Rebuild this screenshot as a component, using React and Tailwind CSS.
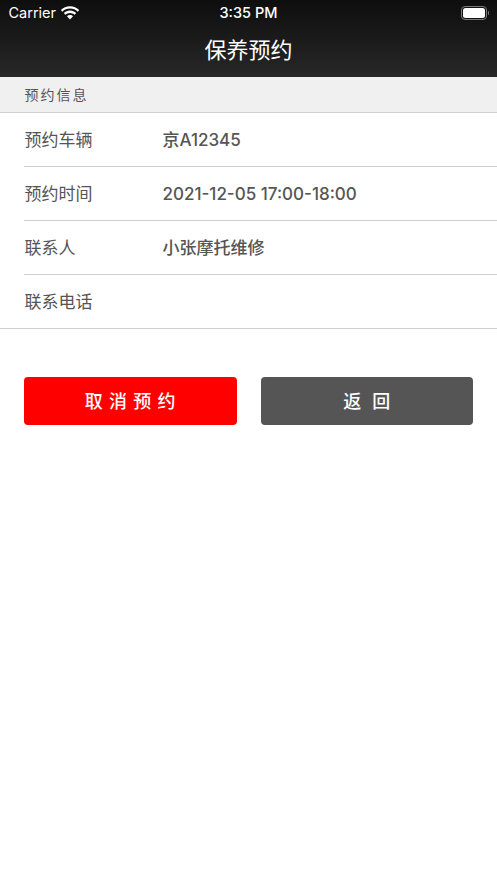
const Row = ({ label, value, last }) => (
  <div className={`flex h-[54px] items-center ${last ? 'border-b border-[#cfcfcf]' : ''}`}>
    <div className="flex h-full flex-1 items-center pl-[24px]">
      <div className={`flex h-full flex-1 items-center pl-[0.5px] pt-[2px] ${last ? '' : 'border-b border-[#cfcfcf]'}`}>
        <span className="w-[138px] text-[17px] text-[#555555]">{label}</span>
        <span className="text-[17px] font-medium text-[#555555]">{value}</span>
      </div>
    </div>
  </div>
);

const Wifi = () => (
  <svg width="20" height="15" viewBox="0 0 20 15" fill="#ffffff">
    <path d="M10 2.6c3 0 5.7 1.2 7.7 3.1l1.5-1.6C16.8 1.7 13.6.3 10 .3S3.2 1.7.8 4.1l1.5 1.6C4.3 3.8 7 2.6 10 2.6z" />
    <path d="M10 6.9c1.8 0 3.4.7 4.6 1.8l1.6-1.6C14.6 5.6 12.4 4.6 10 4.6s-4.6 1-6.2 2.5l1.6 1.6C6.6 7.6 8.2 6.9 10 6.9z" />
    <path d="M10 9c-1.2 0-2.2.5-3 1.2L10 13.4l3-3.2C12.2 9.5 11.2 9 10 9z" />
  </svg>
);

const Battery = () => (
  <div className="flex items-center gap-[1px]">
    <div className="flex h-[14px] w-[26px] items-center justify-center rounded-[4px] border border-[#7a7a7a] p-[1px]">
      <div className="h-full w-full rounded-[2.5px] bg-white" />
    </div>
    <div className="h-[4px] w-[1.5px] rounded-r-sm bg-[#7a7a7a]" />
  </div>
);

export default function App() {
  return (
    <div className="min-h-[883px] bg-white font-['Inter','Noto_Sans_CJK_SC',sans-serif]">
      {/* header */}
      <div className="h-[77px] bg-gradient-to-b from-[#0e0e0e] to-[#282828]">
        <div className="relative flex h-[26px] items-center justify-between pl-[8.5px] pr-[8px] text-white">
          <div className="flex items-center gap-[4px]">
            <span className="text-[14.5px]">Carrier</span>
            <Wifi />
          </div>
          <span className="absolute left-0 right-0 text-center text-[14.5px] font-medium">3:35 PM</span>
          <Battery />
        </div>
        <div className="mt-[8px] text-center text-[22px] leading-[32px] text-white">保养预约</div>
      </div>

      <div className="flex h-[36px] items-center border-b border-[#d0d0d0] bg-[#f0f0f0] pl-[24.5px] text-[14px] tracking-[2px] text-[#555555]">
        预约信息
      </div>

      <Row label="预约车辆" value="京A12345" />
      <Row label="预约时间" value="2021-12-05 17:00-18:00" />
      <Row label="联系人" value="小张摩托维修" />
      <Row label="联系电话" value="" last />

      <div className="mt-[48px] grid grid-cols-2 gap-[24px] px-[24px]">
        <button className="h-[48px] rounded-[4px] bg-[#ff0000] pl-[6px] text-[18px] font-medium tracking-[6.3px] text-white">
          取消预约
        </button>
        <button className="h-[48px] rounded-[4px] bg-[#555555] pl-[11px] text-[18px] font-medium tracking-[11px] text-white">
          返回
        </button>
      </div>
    </div>
  );
}
